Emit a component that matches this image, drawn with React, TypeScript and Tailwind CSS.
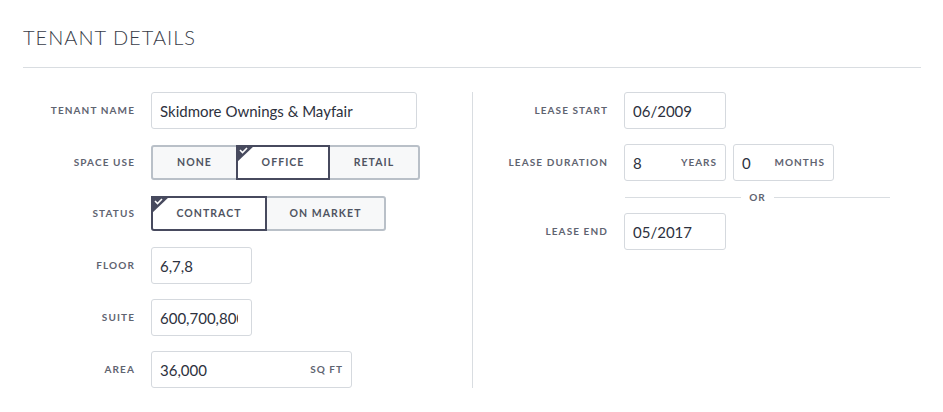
import React from 'react';

const FONT = { fontFamily: 'Lato, "Open Sans", "Noto Sans", sans-serif' };

const labelCls =
  'text-[10px] font-bold tracking-[0.11em] uppercase text-[#5f6471] text-right';

function Field({
  value,
  width,
  unit,
}: {
  value: string;
  width: string;
  unit?: string;
}) {
  return (
    <div
      className={`relative h-[37px] ${width} rounded-[3px] border border-[#d5d9de] bg-white flex items-center overflow-hidden`}
    >
      <span
        className="pl-[8px] pt-[1px] text-[15px] text-[#2d313d] whitespace-nowrap"
        style={FONT}
      >
        {value}
      </span>
      {unit && (
        <span className="absolute right-[8px] text-[10px] font-bold tracking-[0.1em] text-[#5f6471]">
          {unit}
        </span>
      )}
    </div>
  );
}

function CheckCorner() {
  return (
    <svg
      className="absolute -left-[2px] -top-[2px]"
      width="19"
      height="18"
      viewBox="0 0 19 18"
    >
      <polygon points="0,0 19,0 0,18" fill="#474a5e" />
      <polyline
        points="4,5 6.5,7.5 11,3"
        fill="none"
        stroke="#fff"
        strokeWidth="1.6"
      />
    </svg>
  );
}

function Segmented({
  options,
  selected,
  widths,
}: {
  options: string[];
  selected: string;
  widths: string[];
}) {
  return (
    <div className="flex h-[35px]">
      {options.map((opt, i) => {
        const isSel = opt === selected;
        const first = i === 0;
        const last = i === options.length - 1;
        return (
          <div
            key={opt}
            className={[
              'relative flex items-center justify-center border-2 text-[10.5px] font-bold tracking-[0.1em] text-[#4f5462]',
              widths[i],
              first ? 'rounded-l-[3px]' : '-ml-[2px]',
              last ? 'rounded-r-[3px]' : '',
              isSel
                ? 'z-10 border-[#474a5e] bg-white'
                : 'border-[#b9c0c8] bg-[#f7f8f9]',
            ].join(' ')}
          >
            {isSel && <CheckCorner />}
            {opt}
          </div>
        );
      })}
    </div>
  );
}

function Row({
  label,
  labelWidth,
  children,
  className = '',
}: {
  label: string;
  labelWidth: string;
  children: React.ReactNode;
  className?: string;
}) {
  return (
    <div className={`flex items-center ${className}`}>
      <div className={`${labelWidth} ${labelCls} shrink-0`}>{label}</div>
      <div className="ml-[16px]">{children}</div>
    </div>
  );
}

export default function App() {
  return (
    <div className="w-[943px] h-[412px] bg-white overflow-hidden" style={FONT}>
      <div className="px-[23px] pr-[22px]">
        <div className="h-[68px] border-b border-[#d9dde1] pt-[27px]">
          <h1 className="text-[20px] font-light tracking-[0.05em] leading-none text-[#383c48]">
            TENANT DETAILS
          </h1>
        </div>

        <div className="flex pt-[24px]">
          {/* Left column */}
          <div className="w-[449px] flex flex-col">
            <Row label="Tenant Name" labelWidth="w-[112px]">
              <Field value="Skidmore Ownings & Mayfair" width="w-[266px]" />
            </Row>
            <Row label="Space Use" labelWidth="w-[112px]" className="mt-[16px]">
              <Segmented
                options={['NONE', 'OFFICE', 'RETAIL']}
                selected="OFFICE"
                widths={['w-[87px]', 'w-[94px]', 'w-[92px]']}
              />
            </Row>
            <Row label="Status" labelWidth="w-[112px]" className="mt-[16px]">
              <Segmented
                options={['CONTRACT', 'ON MARKET']}
                selected="CONTRACT"
                widths={['w-[116px]', 'w-[121px]']}
              />
            </Row>
            <Row label="Floor" labelWidth="w-[112px]" className="mt-[16px]">
              <Field value="6,7,8" width="w-[101px]" />
            </Row>
            <Row label="Suite" labelWidth="w-[112px]" className="mt-[15px]">
              <div className="w-[101px] h-[37px] rounded-[3px] border border-[#d5d9de] bg-white flex items-center pl-[8px] pr-[13px]">
                <div className="flex-1 min-w-0 overflow-hidden whitespace-nowrap pt-[1px] text-[15px] text-[#2d313d]">
                  600,700,800
                </div>
              </div>
            </Row>
            <Row label="Area" labelWidth="w-[112px]" className="mt-[15px]">
              <Field value="36,000" width="w-[201px]" unit="SQ FT" />
            </Row>
          </div>

          {/* Divider */}
          <div className="w-px h-[296px] bg-[#d9dde1]" />

          {/* Right column */}
          <div className="flex-1 flex flex-col">
            <Row label="Lease Start" labelWidth="w-[135px]">
              <Field value="06/2009" width="w-[102px]" />
            </Row>
            <Row label="Lease Duration" labelWidth="w-[135px]" className="mt-[15px]">
              <div className="flex gap-[7px]">
                <Field value="8" width="w-[102px]" unit="YEARS" />
                <Field value="0" width="w-[101px]" unit="MONTHS" />
              </div>
            </Row>
            <div className="h-[32px] flex items-center ml-[152px] w-[265px]">
              <div className="flex-1 h-px bg-[#d9dde1]" />
              <span className="px-[8px] text-[10px] font-bold tracking-[0.1em] text-[#5f6471]">
                OR
              </span>
              <div className="flex-1 h-px bg-[#d9dde1]" />
            </div>
            <Row label="Lease End" labelWidth="w-[135px]">
              <Field value="05/2017" width="w-[102px]" />
            </Row>
          </div>
        </div>
      </div>
    </div>
  );
}
